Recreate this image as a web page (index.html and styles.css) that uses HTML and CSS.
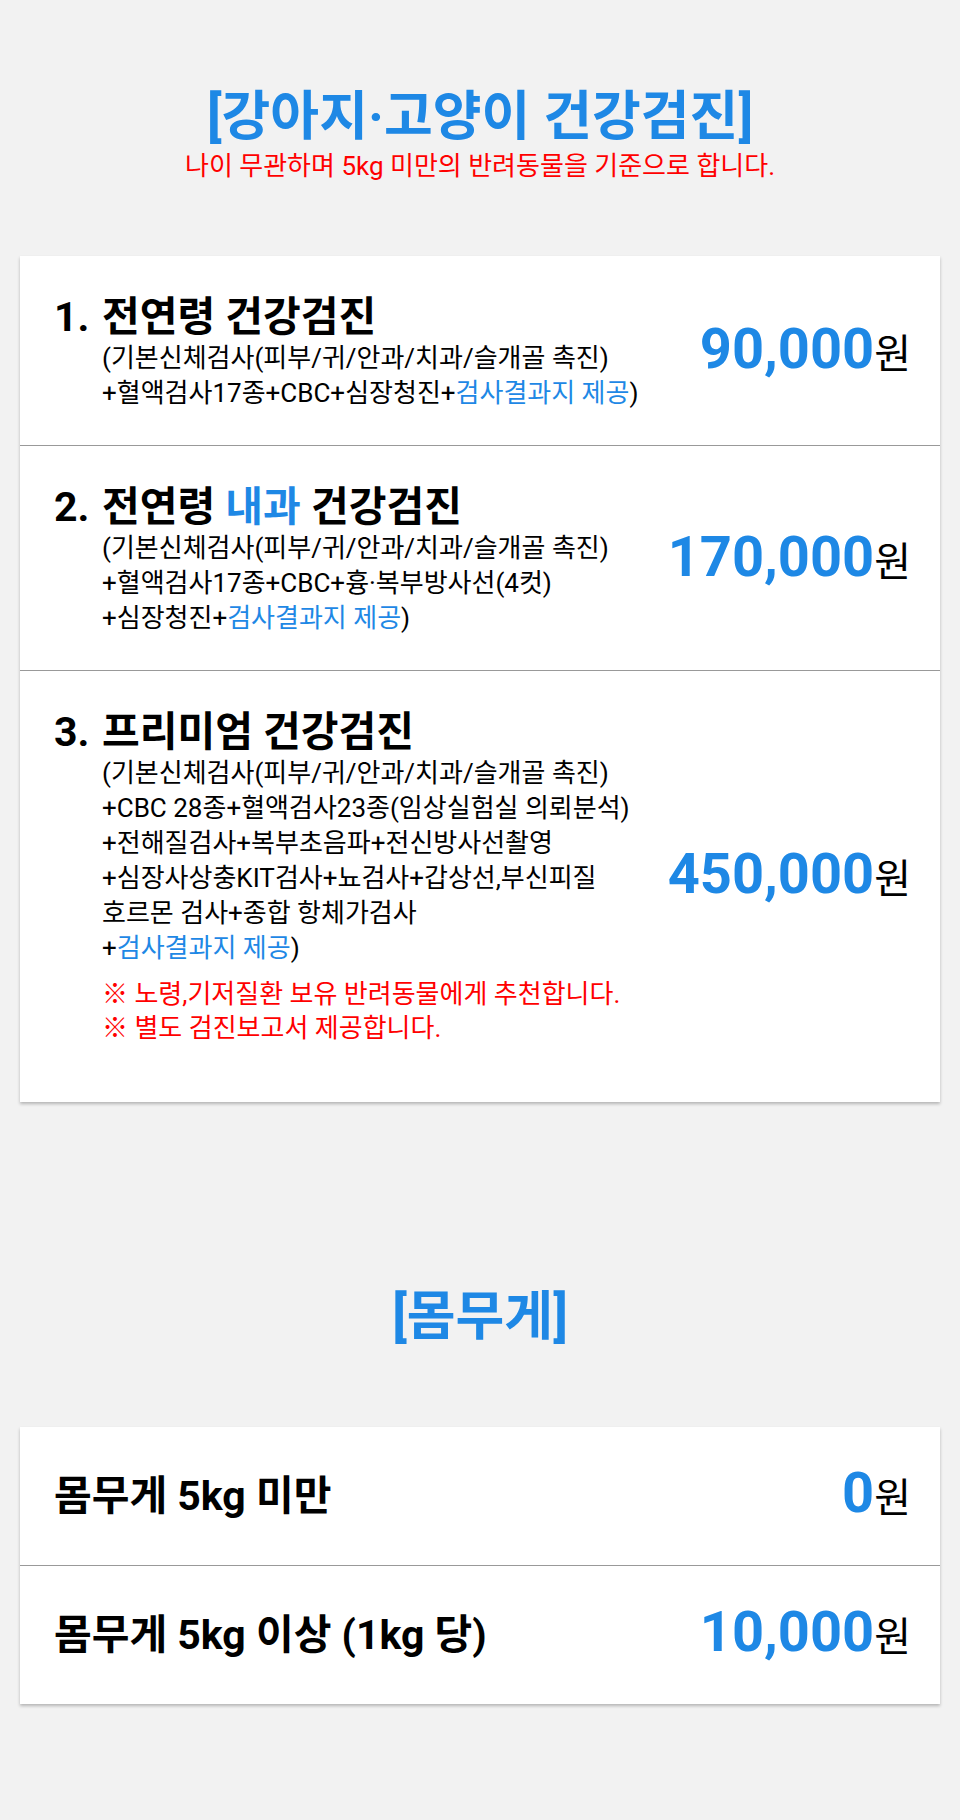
FILE: index.html
```html
<!DOCTYPE html>
<html lang="ko">
<head>
  <meta charset="UTF-8">
  <title>건강검진 요금</title>
  <link rel="stylesheet" href="styles.css">
</head>
<body>
  <div class="page">
    <!-- 건강검진 -->
    <div class="section-head">
      <h2>[강아지·고양이 건강검진]</h2>
      <p class="sub">나이 무관하며 5kg 미만의 반려동물을 기준으로 합니다.</p>
    </div>

    <div class="card">
      <div class="row">
        <div class="info">
          <h3><span class="num">1.</span>전연령 건강검진</h3>
          <p class="desc">(기본신체검사(피부/귀/안과/치과/슬개골 촉진)<br>+혈액검사17종+CBC+심장청진+<span class="blue">검사결과지 제공</span>)</p>
        </div>
        <div class="price"><b>90,000</b>원</div>
      </div>
      <div class="row">
        <div class="info">
          <h3><span class="num">2.</span>전연령 <span class="blue">내과</span> 건강검진</h3>
          <p class="desc">(기본신체검사(피부/귀/안과/치과/슬개골 촉진)<br>+혈액검사17종+CBC+흉·복부방사선(4컷)<br>+심장청진+<span class="blue">검사결과지 제공</span>)</p>
        </div>
        <div class="price"><b>170,000</b>원</div>
      </div>
      <div class="row last">
        <div class="info">
          <h3><span class="num">3.</span>프리미엄 건강검진</h3>
          <p class="desc">(기본신체검사(피부/귀/안과/치과/슬개골 촉진)<br>+CBC 28종+혈액검사23종(임상실험실 의뢰분석)<br>+전해질검사+복부초음파+전신방사선촬영<br>+심장사상충KIT검사+뇨검사+갑상선,부신피질<br>호르몬 검사+종합 항체가검사<br>+<span class="blue">검사결과지 제공</span>)</p>
          <p class="note">※ 노령,기저질환 보유 반려동물에게 추천합니다.<br>※ 별도 검진보고서 제공합니다.</p>
        </div>
        <div class="price"><b>450,000</b>원</div>
      </div>
    </div>

    <!-- 몸무게 -->
    <div class="section-head second">
      <h2>[몸무게]</h2>
    </div>

    <div class="card">
      <div class="row simple">
        <h3>몸무게 5kg 미만</h3>
        <div class="price"><b>0</b>원</div>
      </div>
      <div class="row simple">
        <h3>몸무게 5kg 이상 (1kg 당)</h3>
        <div class="price"><b>10,000</b>원</div>
      </div>
    </div>
  </div>
</body>
</html>
```

FILE: styles.css
```css
body {
  margin: 0;
  background: #f2f2f2;
  font-family: Roboto, "Noto Sans CJK KR", sans-serif;
  color: #000;
}
.page {
  padding: 0 20px 80px;
}
.section-head {
  text-align: center;
  padding: 86px 0 74px;
}
.section-head.second {
  padding: 184px 0 79px;
}
h2 {
  margin: 0;
  font-size: 53px;
  font-weight: 700;
  line-height: 62px;
  color: #1e88e5;
}
.sub {
  margin: 2px 0 0;
  font-size: 26px;
  line-height: 32px;
  color: #ff0000;
}
.card {
  background: #fff;
  box-shadow: 0 2px 3px rgba(0,0,0,0.25);
}
.row {
  display: flex;
  align-items: center;
  justify-content: space-between;
  padding: 37px 29px 34px 34px;
  border-bottom: 1px solid #999;
}
.row.last,
.row.simple:last-child {
  border-bottom: none;
}
.row.last {
  padding-bottom: 57px;
}
.row.simple {
  padding: 42px 29px 42px 34px;
}
h3 {
  margin: 0;
  font-size: 41px;
  font-weight: 700;
  line-height: 48px;
}
.num {
  display: inline-block;
  width: 48px;
}
.desc {
  margin: 0 0 0 48px;
  font-size: 26px;
  line-height: 35px;
}
.note {
  margin: 11px 0 0 48px;
  font-size: 26px;
  line-height: 34px;
  color: #ff0000;
}
.blue {
  color: #1e88e5;
}
.price {
  font-size: 40px;
  line-height: 48px;
  white-space: nowrap;
}
.price b {
  font-size: 56px;
  color: #1e88e5;
}
```
